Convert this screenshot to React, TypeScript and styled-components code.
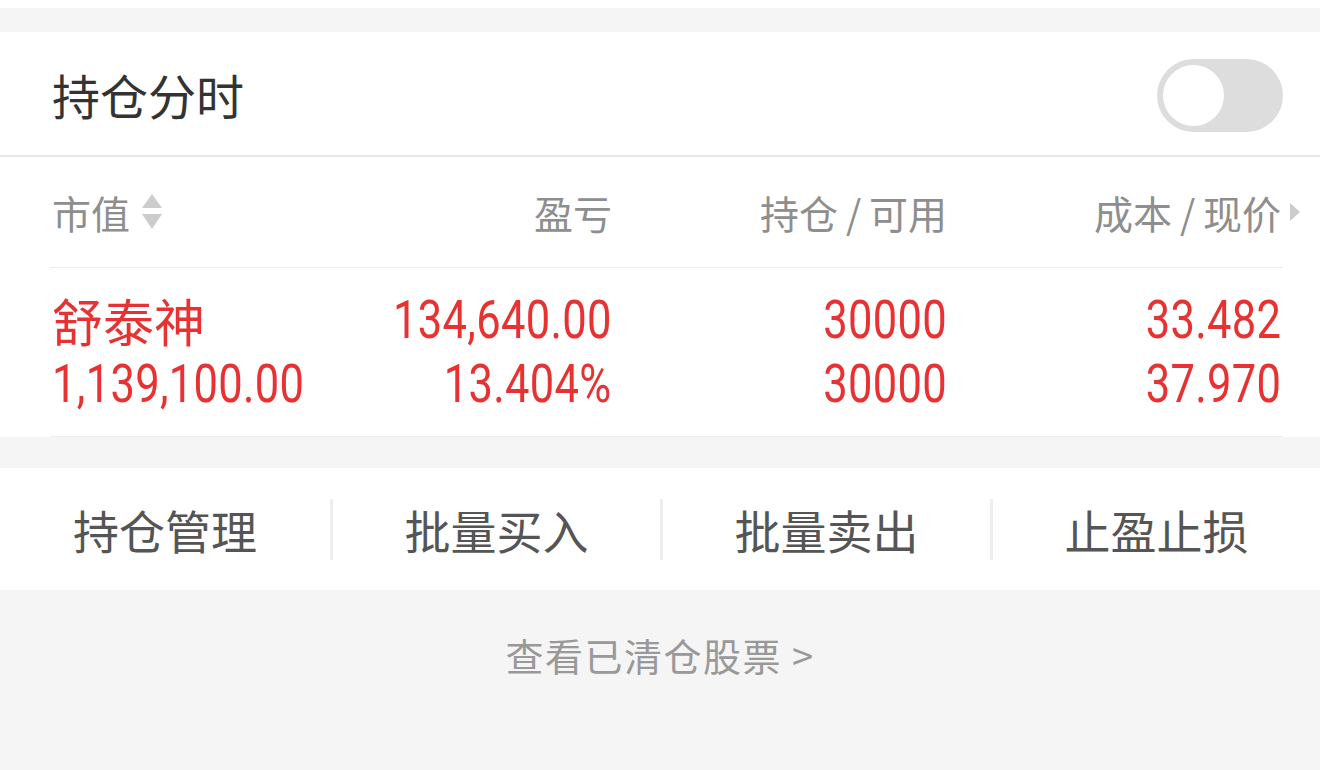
import { createGlobalStyle } from "styled-components"
import styled from "styled-components"

const GlobalStyle = createGlobalStyle`
  html, body {
    margin: 0;
    padding: 0;
    background: #f5f5f5;
  }
  body {
    font-family: "Noto Sans CJK SC", "Noto Sans", sans-serif;
  }
`

const columns = [
  { title: "市值", sort: true },
  { title: "盈亏" },
  { title: "持仓\u2009/\u2009可用" },
  { title: "成本\u2009/\u2009现价", more: true },
]

const position = {
  name: "舒泰神",
  value: "1,139,100.00",
  profit: "134,640.00",
  ratio: "13.404%",
  hold: "30000",
  usable: "30000",
  cost: "33.482",
  price: "37.970",
}

const actions = ["持仓管理", "批量买入", "批量卖出", "止盈止损"]

export default function App() {
  return (
    <Page>
      <GlobalStyle />
      <TopStrip />
      <Gap $h={24} />
      <Card>
        <HeaderRow>
          <Title>持仓分时</Title>
          <Toggle>
            <Knob />
          </Toggle>
        </HeaderRow>

        <Table>
          <HeadRow>
            {columns.map((c, i) => (
              <HeadCell key={c.title} $left={i === 0}>
                {c.title}
                {c.sort && (
                  <SortIcon width="24" height="40" viewBox="0 0 24 40">
                    <path d="M12 2 L22 16 H2 Z" fill="#cccccc" />
                    <path d="M2 22 H22 L12 37 Z" fill="#cccccc" />
                  </SortIcon>
                )}
                {c.more && (
                  <MoreIcon width="12" height="20" viewBox="0 0 12 20">
                    <path d="M1 1 L11 10 L1 19 Z" fill="#cccccc" />
                  </MoreIcon>
                )}
              </HeadCell>
            ))}
          </HeadRow>

          <DataRow>
            <Cell $left>
              <Name>{position.name}</Name>
              <Line>
                <Num $left>{position.value}</Num>
              </Line>
            </Cell>
            <Cell>
              <Line>
                <Num>{position.profit}</Num>
              </Line>
              <Line>
                <Num>{position.ratio}</Num>
              </Line>
            </Cell>
            <Cell>
              <Line>
                <Num>{position.hold}</Num>
              </Line>
              <Line>
                <Num>{position.usable}</Num>
              </Line>
            </Cell>
            <Cell>
              <Line>
                <Num>{position.cost}</Num>
              </Line>
              <Line>
                <Num>{position.price}</Num>
              </Line>
            </Cell>
          </DataRow>
        </Table>
      </Card>

      <Gap $h={31} />

      <ActionBar>
        {actions.map((a, i) => (
          <Action key={a} $first={i === 0}>
            {a}
          </Action>
        ))}
      </ActionBar>

      <ClearedLink>查看已清仓股票 &gt;</ClearedLink>
    </Page>
  )
}

const Page = styled.div`
  width: 1320px;
  min-height: 770px;
  background: #f5f5f5;
`

const TopStrip = styled.div`
  height: 8px;
  background: #ffffff;
`

const Gap = styled.div<{ $h: number }>`
  height: ${({ $h }) => $h}px;
`

const Card = styled.section`
  background: #ffffff;
`

const HeaderRow = styled.div`
  display: flex;
  align-items: center;
  justify-content: space-between;
  height: 123px;
  padding: 0 37px 0 52px;
  border-bottom: 2px solid #e8e8e8;
`

const Title = styled.h2`
  margin: 0;
  font-size: 48px;
  font-weight: 400;
  color: #333333;
  line-height: 1;
`

const Toggle = styled.div`
  display: flex;
  align-items: center;
  box-sizing: border-box;
  width: 126px;
  height: 73px;
  margin-top: 4px;
  padding: 0 6px;
  border-radius: 37px;
  background: #dddddd;
`

const Knob = styled.div`
  width: 61px;
  height: 61px;
  border-radius: 50%;
  background: #ffffff;
`

const Table = styled.div`
  padding: 0 37px 0 50px;
`

const grid = `
  display: grid;
  grid-template-columns: 225px 335px 335px 334px;
`

const HeadRow = styled.div`
  ${grid}
  height: 110px;
  align-items: center;
  border-bottom: 1px solid #eeeeee;
`

const HeadCell = styled.div<{ $left?: boolean }>`
  position: relative;
  display: flex;
  align-items: center;
  justify-content: ${({ $left }) => ($left ? "flex-start" : "flex-end")};
  padding-left: ${({ $left }) => ($left ? "2px" : "0")};
  margin-right: ${({ $left }) => ($left ? "0" : "-2px")};
  font-size: 39px;
  color: #8e8e8e;
  line-height: 1;
  white-space: pre;
`

const SortIcon = styled.svg`
  margin-left: 10px;
`

const MoreIcon = styled.svg`
  position: absolute;
  right: -20px;
  top: 50%;
  transform: translateY(-50%);
`

const DataRow = styled.div`
  ${grid}
  height: 168px;
  align-content: center;
  border-bottom: 1px solid #eeeeee;
`

const Cell = styled.div<{ $left?: boolean }>`
  display: flex;
  flex-direction: column;
  align-items: ${({ $left }) => ($left ? "flex-start" : "flex-end")};
  padding-left: ${({ $left }) => ($left ? "2px" : "0")};
  margin-right: ${({ $left }) => ($left ? "0" : "-2px")};
  color: #e83232;
  min-width: 0;
`

const Name = styled.div`
  height: 64px;
  display: flex;
  align-items: center;
  font-size: 51px;
  line-height: 1;
`

const Line = styled.div`
  height: 64px;
  display: flex;
  align-items: center;
`

/* narrow DIN-like digits: Roboto squeezed horizontally */
const Num = styled.span<{ $left?: boolean }>`
  display: inline-block;
  font-family: "Roboto", "Liberation Sans", sans-serif;
  font-size: 53px;
  line-height: 1;
  white-space: nowrap;
  letter-spacing: 0.4px;
  transform: scaleX(0.82);
  transform-origin: ${({ $left }) => ($left ? "left" : "right")} center;
`

const ActionBar = styled.nav`
  display: grid;
  grid-template-columns: repeat(4, 1fr);
  height: 122px;
  align-items: center;
  background: #ffffff;
`

const Action = styled.div<{ $first?: boolean }>`
  display: flex;
  align-items: center;
  justify-content: center;
  height: 61px;
  border-left: ${({ $first }) => ($first ? "none" : "3px solid #eeeeee")};
  font-size: 46px;
  color: #555555;
  line-height: 1;
`

const ClearedLink = styled.div`
  padding-top: 40px;
  height: 50px;
  display: flex;
  align-items: center;
  justify-content: center;
  font-size: 38px;
  letter-spacing: 1.5px;
  color: #999999;
  line-height: 1;
  white-space: pre;
`
